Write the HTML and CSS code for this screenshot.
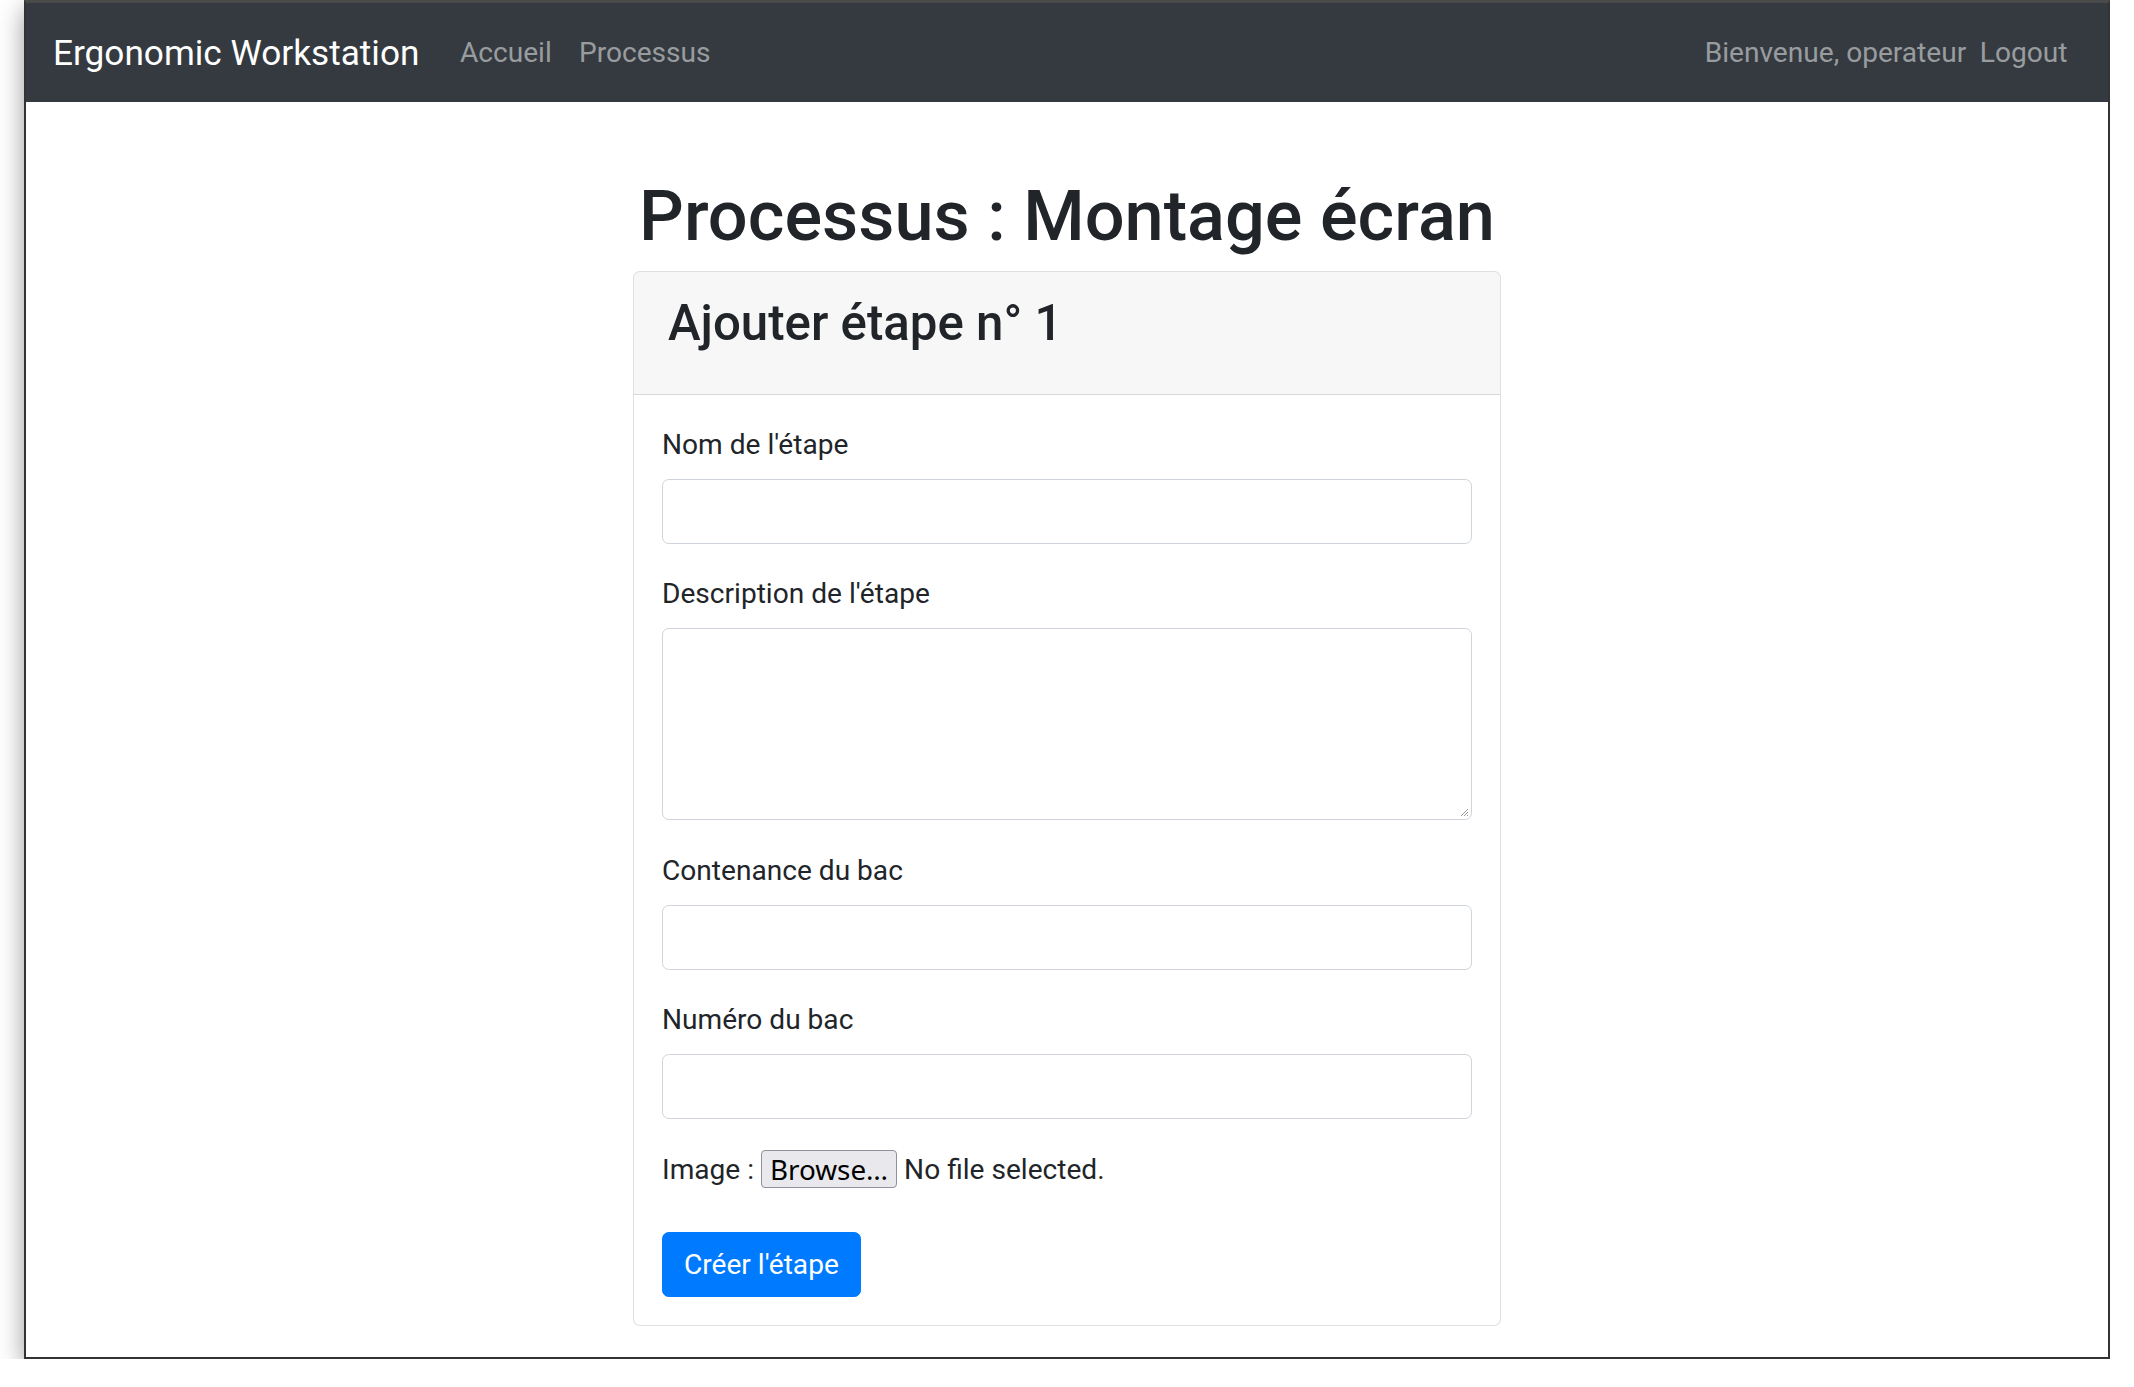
FILE: index.html
```html
<!DOCTYPE html>
<html lang="fr">
<head>
<meta charset="utf-8">
<title>Ergonomic Workstation</title>
<link rel="stylesheet" href="styles.css">
</head>
<body>
<div class="window">
  <nav class="navbar">
    <a class="brand" href="#">Ergonomic Workstation</a>
    <ul class="nav-list">
      <li><a class="nav-link" href="#">Accueil</a></li>
      <li><a class="nav-link" href="#">Processus</a></li>
    </ul>
    <div class="nav-right">
      <span class="nav-text">Bienvenue, operateur</span>
      <a class="nav-link" href="#">Logout</a>
    </div>
  </nav>
  <main class="main">
    <h1 class="title">Processus : Montage écran</h1>
    <div class="card">
      <div class="card-header">
        <h3 class="card-title">Ajouter étape n° 1</h3>
      </div>
      <form class="card-body">
        <div class="form-group">
          <label class="label">Nom de l'étape</label>
          <div class="input"></div>
        </div>
        <div class="form-group">
          <label class="label">Description de l'étape</label>
          <div class="input textarea">
            <svg class="grip" width="9" height="9" viewBox="0 0 9 9"><path d="M8 1L1 8M8 4L4 8M8 7L7 8" stroke="#9a9a9a" stroke-width="1"/></svg>
          </div>
        </div>
        <div class="form-group">
          <label class="label">Contenance du bac</label>
          <div class="input"></div>
        </div>
        <div class="form-group">
          <label class="label">Numéro du bac</label>
          <div class="input"></div>
        </div>
        <div class="file-row">
          <span class="file-label">Image :</span>
          <span class="browse">Browse…</span>
          <span class="file-status">No file selected.</span>
        </div>
        <button class="btn-primary" type="button">Créer l'étape</button>
      </form>
    </div>
  </main>
</div>
</body>
</html>
```
FILE: styles.css
```css
html, body {
  margin: 0;
  padding: 0;
  background: #ffffff;
}
body {
  font-family: Roboto, "Liberation Sans", sans-serif;
  color: #212529;
  padding-left: 24px;
  width: 2086px;
}
.window {
  box-sizing: border-box;
  width: 2086px;
  height: 1359px;
  border: 2px solid #333333;
  border-top: 3px solid #4a4a4a;
  background: #ffffff;
  box-shadow: 0 8px 24px rgba(0, 0, 0, 0.4);
  overflow: hidden;
}
.navbar {
  height: 99px;
  background: #343a40;
  display: flex;
  align-items: center;
  padding: 2px 27px 0;
  box-sizing: border-box;
}
.brand {
  font-size: 35.2px;
  line-height: 51px;
  color: #ffffff;
  text-decoration: none;
  margin-right: 27px;
}
.nav-list {
  display: flex;
  list-style: none;
  margin: 0;
  padding: 0;
}
.nav-link {
  display: block;
  font-size: 28.1px;
  line-height: 40.8px;
  padding: 0 13.6px;
  color: rgba(255, 255, 255, 0.5);
  text-decoration: none;
}
.nav-right {
  margin-left: auto;
  display: flex;
  align-items: center;
}
.nav-text {
  font-size: 28.1px;
  line-height: 40.8px;
  color: rgba(255, 255, 255, 0.5);
}
.main {
  width: 868px;
  margin: 0 auto;
  padding-top: 74px;
}
.title {
  margin: 0 0 13.6px;
  font-size: 70.3px;
  font-weight: 500;
  line-height: 81.6px;
  text-align: center;
  color: #212529;
}
.card {
  border: 1px solid rgba(0, 0, 0, 0.125);
  border-radius: 7px;
  background: #ffffff;
}
.card-header {
  background: rgba(0, 0, 0, 0.03);
  border-bottom: 1px solid rgba(0, 0, 0, 0.125);
  border-radius: 6px 6px 0 0;
  padding: 23px 34px 41px;
}
.card-title {
  margin: 0;
  font-size: 49.2px;
  font-weight: 500;
  line-height: 57.6px;
}
.card-body {
  padding: 29px 28px 28px;
  margin: 0;
}
.form-group {
  margin-bottom: 29.5px;
}
.label {
  display: block;
  font-size: 28.1px;
  line-height: 41px;
  margin-bottom: 14px;
}
.input {
  box-sizing: border-box;
  height: 65px;
  border: 1px solid #ced4da;
  border-radius: 6.8px;
  background: #ffffff;
}
.textarea {
  height: 192px;
  position: relative;
}
.grip {
  position: absolute;
  right: 2px;
  bottom: 2px;
}
.file-row {
  display: flex;
  align-items: center;
  height: 41px;
  margin-bottom: 42px;
  font-size: 28.1px;
}
.file-label {
  margin-right: 7px;
}
.browse {
  box-sizing: border-box;
  height: 38px;
  display: inline-flex;
  align-items: center;
  padding: 0 8px;
  font-family: "Noto Sans", "Open Sans", sans-serif;
  font-size: 27.8px;
  color: #000000;
  background: #e9e9ed;
  border: 1px solid #8f8f9d;
  border-radius: 4px;
  margin-right: 7px;
}
.file-status {
  color: #212529;
}
.btn-primary {
  box-sizing: border-box;
  height: 65px;
  padding: 0 21px;
  font-family: Roboto, "Liberation Sans", sans-serif;
  font-size: 28.1px;
  color: #ffffff;
  background: #007bff;
  border: 1px solid #007bff;
  border-radius: 6.8px;
}
```
